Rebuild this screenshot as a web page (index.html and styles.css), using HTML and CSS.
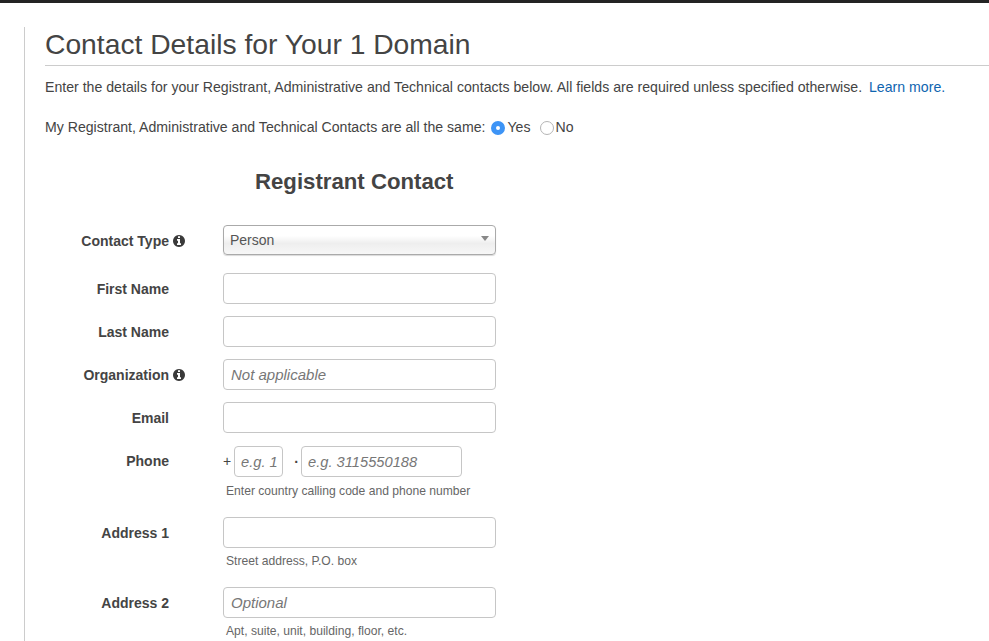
FILE: index.html
```html
<!DOCTYPE html>
<html lang="en">
<head>
    <meta charset="UTF-8">
    <meta name="viewport" content="width=device-width, initial-scale=1.0">
    <title>Contact Details</title>
    <link rel="stylesheet" href="styles.css">
</head>
<body>
    <div class="topbar"></div>
    <div class="content">
        <h1>Contact Details for Your 1 Domain</h1>
        <p class="intro">Enter the details for your Registrant, Administrative and Technical contacts below. All fields are required unless specified otherwise. <a href="#">Learn more.</a></p>
        <div class="same-contact">
            <span>My Registrant, Administrative and Technical Contacts are all the same:</span>
            <label class="radio"><input type="radio" name="same" checked>Yes</label>
            <label class="radio"><input type="radio" name="same">No</label>
        </div>
        <h2>Registrant Contact</h2>
        <form class="contact-form">
            <div class="row row-type">
                <label class="row-label" for="type">Contact Type</label>
                <span class="row-help">
                    <svg class="info" viewBox="0 0 1792 1792"><path d="M1152 1376v-160q0-14-9-23t-23-9h-96v-512q0-14-9-23t-23-9h-320q-14 0-23 9t-9 23v160q0 14 9 23t23 9h96v320h-96q-14 0-23 9t-9 23v160q0 14 9 23t23 9h448q14 0 23-9t9-23zm-128-896v-160q0-14-9-23t-23-9h-192q-14 0-23 9t-9 23v160q0 14 9 23t23 9h192q14 0 23-9t9-23zm640 416q0 209-103 385.5t-279.5 279.5-385.5 103-385.5-103-279.5-279.5-103-385.5 103-385.5 279.5-279.5 385.5-103 385.5 103 279.5 279.5 103 385.5z"/></svg>
                </span>
                <div class="row-field select-wrap">
                    <select id="type"><option>Person</option></select>
                </div>
            </div>
            <div class="row">
                <label class="row-label" for="first">First Name</label>
                <span class="row-help"></span>
                <div class="row-field"><input type="text" id="first"></div>
            </div>
            <div class="row">
                <label class="row-label" for="last">Last Name</label>
                <span class="row-help"></span>
                <div class="row-field"><input type="text" id="last"></div>
            </div>
            <div class="row">
                <label class="row-label" for="org">Organization</label>
                <span class="row-help">
                    <svg class="info" viewBox="0 0 1792 1792"><path d="M1152 1376v-160q0-14-9-23t-23-9h-96v-512q0-14-9-23t-23-9h-320q-14 0-23 9t-9 23v160q0 14 9 23t23 9h96v320h-96q-14 0-23 9t-9 23v160q0 14 9 23t23 9h448q14 0 23-9t9-23zm-128-896v-160q0-14-9-23t-23-9h-192q-14 0-23 9t-9 23v160q0 14 9 23t23 9h192q14 0 23-9t9-23zm640 416q0 209-103 385.5t-279.5 279.5-385.5 103-385.5-103-279.5-279.5-103-385.5 103-385.5 279.5-279.5 385.5-103 385.5 103 279.5 279.5 103 385.5z"/></svg>
                </span>
                <div class="row-field"><input type="text" id="org" placeholder="Not applicable"></div>
            </div>
            <div class="row row-email">
                <label class="row-label" for="email">Email</label>
                <span class="row-help"></span>
                <div class="row-field"><input type="text" id="email"></div>
            </div>
            <div class="row row-hint row-phone">
                <label class="row-label" for="code">Phone</label>
                <span class="row-help"></span>
                <div class="row-field">
                    <div class="phone">
                        <span class="phone-plus">+</span>
                        <input type="text" id="code" class="phone-code" placeholder="e.g. 1">
                        <span class="phone-dot">&middot;</span>
                        <input type="text" id="phone" class="phone-number" placeholder="e.g. 3115550188">
                    </div>
                    <div class="hint">Enter country calling code and phone number</div>
                </div>
            </div>
            <div class="row row-hint">
                <label class="row-label" for="addr1">Address 1</label>
                <span class="row-help"></span>
                <div class="row-field">
                    <input type="text" id="addr1">
                    <div class="hint">Street address, P.O. box</div>
                </div>
            </div>
            <div class="row row-hint row-last">
                <label class="row-label" for="addr2">Address 2</label>
                <span class="row-help"></span>
                <div class="row-field">
                    <input type="text" id="addr2" placeholder="Optional">
                    <div class="hint">Apt, suite, unit, building, floor, etc.</div>
                </div>
            </div>
        </form>
    </div>
</body>
</html>
```

FILE: styles.css
```css
html, body { height: 100%; overflow: hidden; }
body { display: flex; flex-direction: column; font-family: "Liberation Sans", Arial, sans-serif; font-size: 14px; color: #444; margin: 0; padding: 0; background: #fff; }
.topbar { height: 3px; flex: none; background-color: #232323; }
.content { flex: 1; min-height: 0; margin: 24px 0 0 24px; padding-left: 20px; border-left: 1px solid #ccc; }
h1 { font-size: 28.25px; font-weight: normal; line-height: 34px; margin: 0; padding-bottom: 4px; border-bottom: 1px solid #ccc; color: #444; }
.intro { font-size: 14.13px; margin: 12px 0 0; line-height: 18px; white-space: nowrap; }
a { color: #0f65b0; text-decoration: none; margin-left: 3px; }
.same-contact { display: flex; align-items: center; font-size: 14.12px; margin-top: 21px; height: 20px; }
.radio { display: flex; align-items: center; margin-left: 6px; }
.radio + .radio { margin-left: 9px; }
.radio input { appearance: none; width: 14px; height: 14px; margin: 1px 2px 0 0; border: 1px solid #b5b5b5; border-radius: 50%; background: #fff; }
.radio input:checked { border: 5px solid #3d94f6; background: #fff; }
h2 { font-size: 22.2px; line-height: 28px; margin: 31px 0 0; padding-left: 210px; color: #444; }
.contact-form { margin-top: 29px; }
.row { display: flex; height: 31px; margin-bottom: 12px; }
.row-type { height: 30px; margin-bottom: 18px; }
.row-email { margin-bottom: 13px; }
.row-hint { height: auto; margin-bottom: 18px; }
.row-last { margin-bottom: 0; }
.row-label { width: 124px; line-height: 33px; height: 31px; text-align: right; font-weight: bold; flex: none; }
.row-help { width: 54px; flex: none; display: flex; padding-top: 9px; box-sizing: border-box; }
.info { width: 14px; height: 14px; margin-left: 3px; fill: #3a3a3a; }
.row-field { width: 273px; flex: none; position: relative; }
input[type="text"] { width: 100%; height: 31px; box-sizing: border-box; border: 1px solid #c6c6c6; border-radius: 4px; padding: 0 7px; margin: 0; font-family: inherit; font-size: 15px; color: #444; background: #fff; display: block; outline: none; }
input::placeholder { font-style: italic; color: #777; opacity: 1; }
select { appearance: none; width: 100%; height: 30px; box-sizing: border-box; border: 1px solid #aaa; border-radius: 4px; padding: 0 6px; font-family: inherit; font-size: 14px; color: #555; background: linear-gradient(#fff 35%, #eee 62%, #f7f7f7 100%); box-shadow: 0 1px 1px rgba(0, 0, 0, 0.15); display: block; }
.select-wrap::after { content: ""; position: absolute; right: 7px; top: 11px; border-left: 4px solid transparent; border-right: 4px solid transparent; border-top: 5px solid #888; }
.phone { display: flex; align-items: center; }
.phone-plus { width: 11px; flex: none; font-size: 14px; margin-bottom: 2px; }
.phone-dot { width: 18px; flex: none; box-sizing: border-box; padding-right: 2px; text-align: right; font-weight: bold; }
input.phone-code { width: 49px; flex: none; font-size: 14.7px; padding: 0 0 0 6px; }
input.phone-number { width: 161px; flex: none; font-size: 14.7px; padding: 0 6px; }
.hint { font-size: 12.12px; line-height: 16px; color: #666; margin: 5px 0 0 3px; }
.row-phone { margin-top: 1px; }
.row-phone .row-label { line-height: 31px; }
.row-phone .hint { margin-top: 6px; }
```
